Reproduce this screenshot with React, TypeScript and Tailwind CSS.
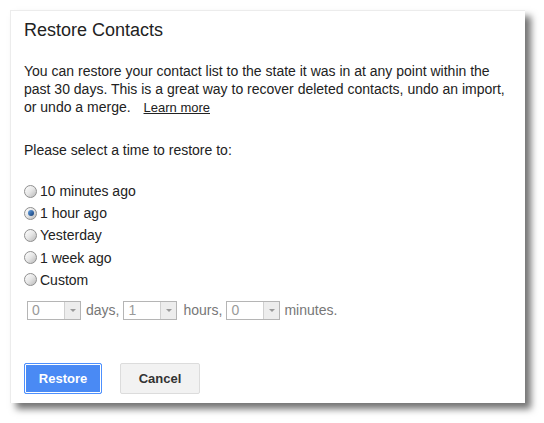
import React from "react";

const options = ["10 minutes ago", "1 hour ago", "Yesterday", "1 week ago", "Custom"];

const Radio = ({ checked }: { checked?: boolean }) => (
  <span className="relative inline-flex h-[13px] w-[13px] shrink-0 items-center justify-center rounded-full border border-[#8f8f8f] bg-gradient-to-br from-[#ffffff] via-[#e6e6e6] to-[#b9b9b9]">
    {checked && (
      <span className="h-[6px] w-[6px] rounded-full bg-gradient-to-br from-[#6aa6e6] to-[#0e3a74]" />
    )}
  </span>
);

const Select = ({ value }: { value: string }) => (
  <div className="flex h-[19px] w-[54px] border border-[#b5b5b5] bg-white">
    <div className="flex flex-1 items-center pl-[4px] text-[14px] text-[#9a9a9a]">{value}</div>
    <div className="flex w-[16px] items-center justify-center border-l border-[#d0d0d0] bg-[#ededed]">
      <span className="h-0 w-0 border-l-[3px] border-r-[3px] border-t-[3px] border-l-transparent border-r-transparent border-t-[#9a9a9a]" />
    </div>
  </div>
);

const App = () => {
  return (
    <div className="h-[423px] w-[544px] bg-white pl-[10px] pt-[10px] font-['Liberation_Sans',Arial,sans-serif] text-[#222]">
      <div className="flex h-[393px] w-[515px] flex-col border-l border-t border-[#ececec] bg-white pl-[13px] shadow-[6px_6px_7px_rgba(0,0,0,0.55)]">
        <h1 className="mt-[8px] text-[18px] leading-[22px]">Restore Contacts</h1>
        <p className="mt-[21px] text-[14px] leading-[18px]">
          You can restore your contact list to the state it was in at any point within the
          <br />
          past 30 days. This is a great way to recover deleted contacts, undo an import,
          <br />
          or undo a merge.{" "}
          <a href="#" className="ml-[9px] text-[13px] text-[#222] underline">
            Learn more
          </a>
        </p>
        <p className="mt-[24px] text-[14px] leading-[18px]">Please select a time to restore to:</p>
        <div className="mt-[21px] flex flex-col">
          {options.map((o, i) => (
            <label key={o} className="flex h-[22.2px] items-center gap-[3px] text-[14px] leading-[22px]">
              <Radio checked={i === 1} />
              <span>{o}</span>
            </label>
          ))}
        </div>
        <div className="ml-[3px] mt-[9px] flex items-center text-[14px] text-[#777]">
          <Select value="0" />
          <span className="ml-[5px] mr-[4px]">days,</span>
          <Select value="1" />
          <span className="ml-[6px] mr-[4px]">hours,</span>
          <Select value="0" />
          <span className="ml-[4px]">minutes.</span>
        </div>
        <div className="mt-[42px] flex gap-[18px]">
          <button className="h-[31px] w-[78px] rounded-[2px] border border-[#4d90fe] bg-[#4a8af4] text-[13px] font-bold text-white shadow-[inset_0_0_0_1px_#ffffff]">
            Restore
          </button>
          <button className="h-[31px] w-[80px] rounded-[2px] border border-[#dcdcdc] bg-[#f2f2f2] text-[13px] font-bold text-[#333]">
            Cancel
          </button>
        </div>
      </div>
    </div>
  );
};

export default App;
